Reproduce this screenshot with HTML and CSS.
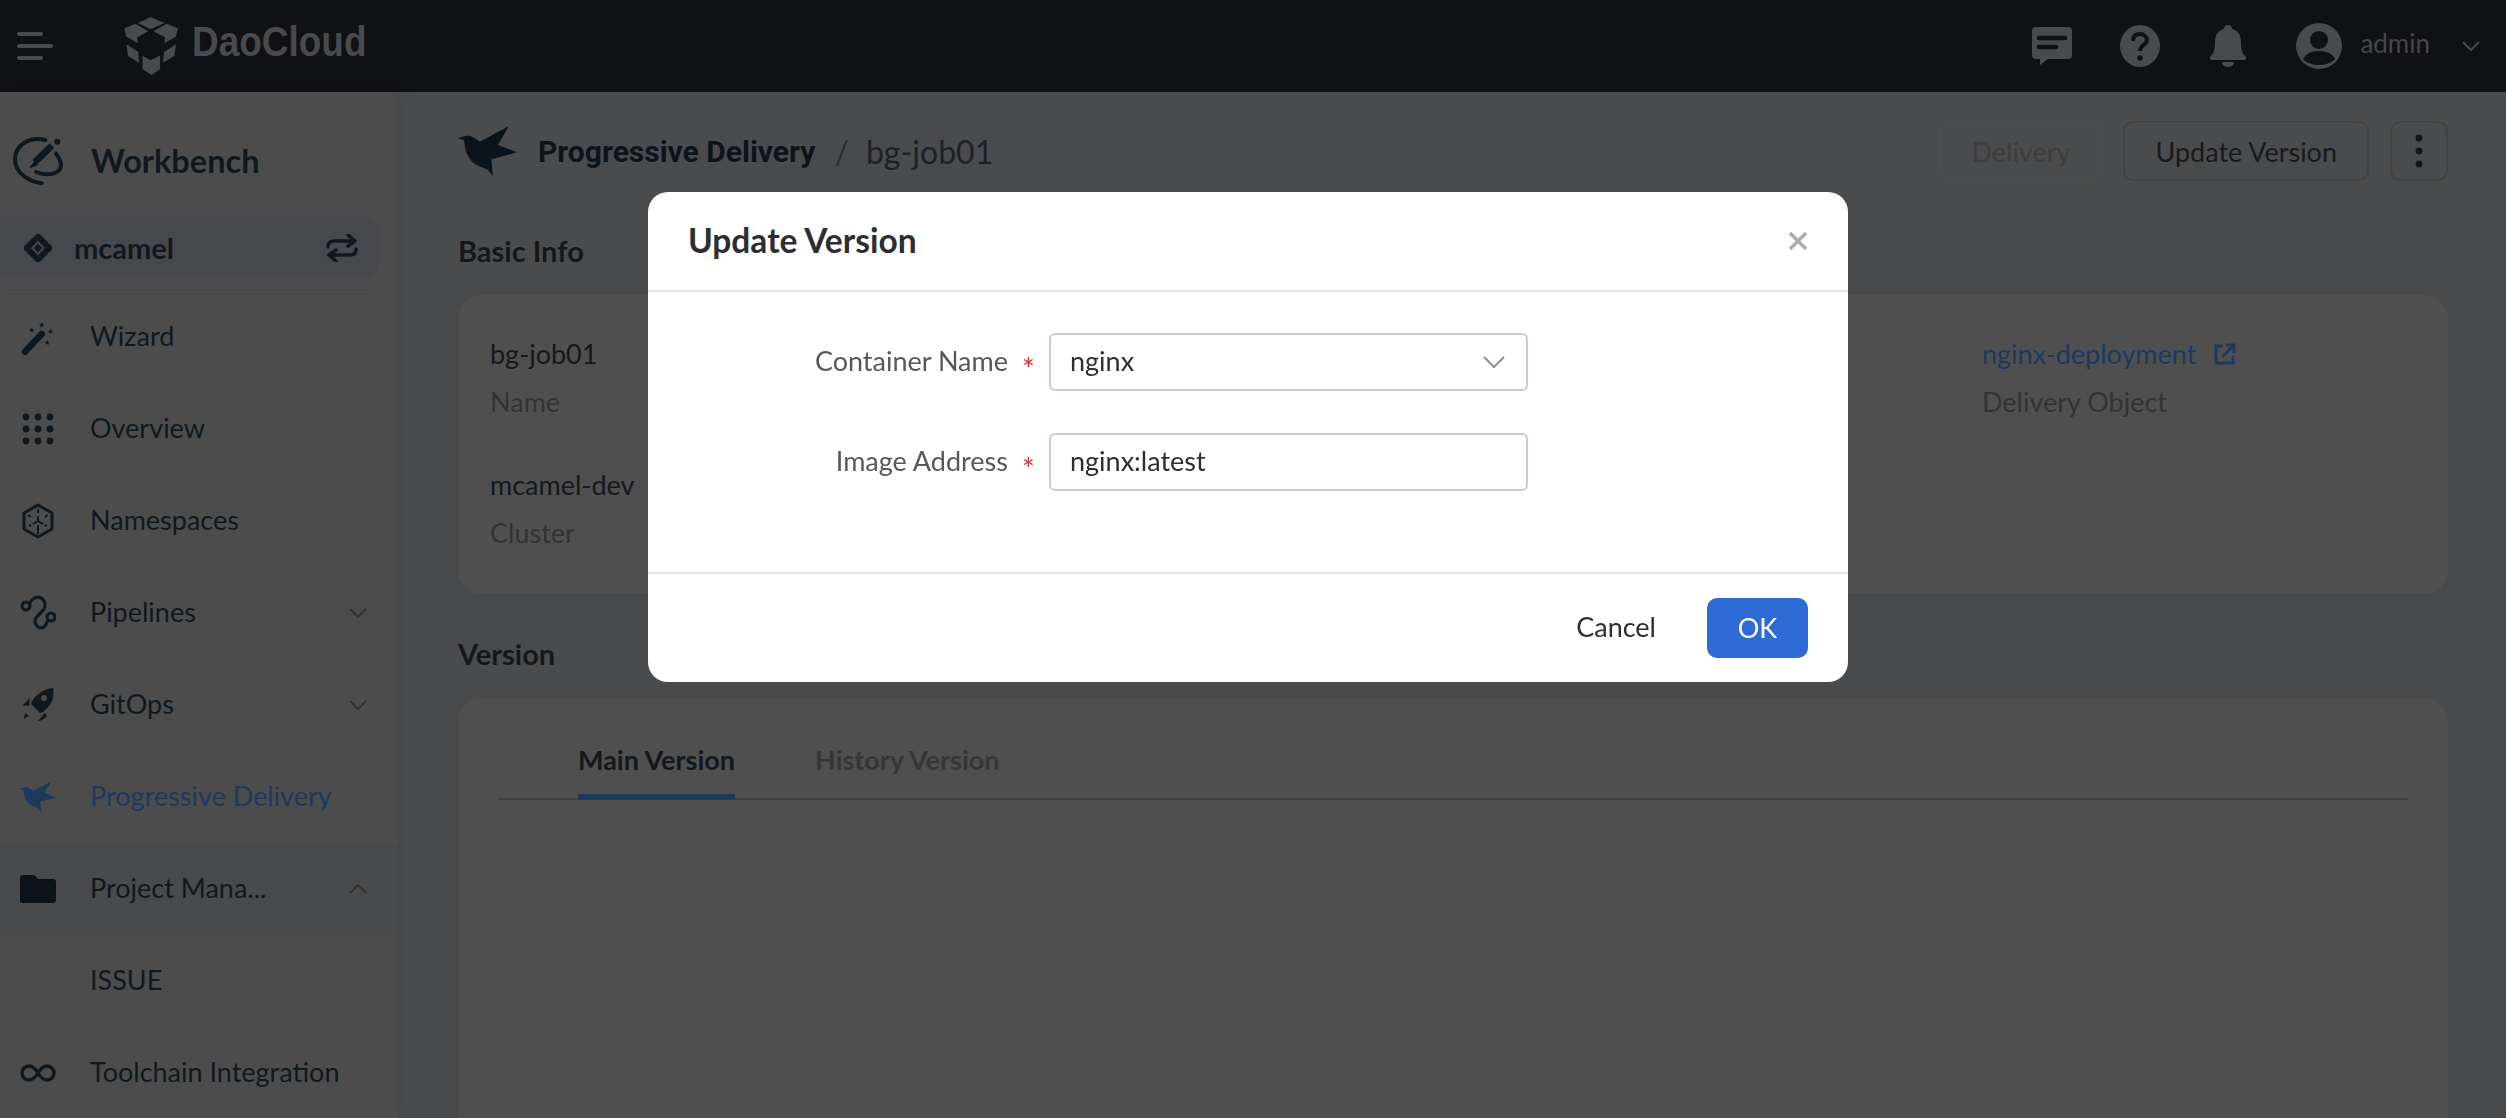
FILE: index.html
```html
<!DOCTYPE html>
<html lang="en">
<head>
    <meta charset="UTF-8">
    <meta name="viewport" content="width=device-width, initial-scale=1.0">
    <title>Progressive Delivery - bg-job01</title>
    <link rel="stylesheet" href="styles.css">
</head>
<body>
    <header class="topbar">
        <svg class="burger" width="36" height="30" viewBox="0 0 36 30"><path d="M2 3h22M2 15h32M2 27h22" fill="none" stroke="currentColor" stroke-width="4" stroke-linecap="round"/></svg>
        <div class="logo">
            <svg width="54" height="58" viewBox="43 24 160 172" fill="currentColor">
                <polygon points="122,24 163,42 122,60 84,42"/>
                <polygon points="44,58 76,44 115,66 82,84 84,102 50,82"/>
                <polygon points="203,58 170,44 130,66 164,84 163,102 197,82"/>
                <polygon points="50,105 85,128 88,160 55,140"/>
                <polygon points="197,105 162,128 158,160 192,140"/>
                <polygon points="98,138 122,152 150,138 150,178 125,196 98,178"/>
            </svg>
            <span class="logo-text">DaoCloud</span>
        </div>
        <div class="top-icons">
            <svg class="top-chat" width="40" height="38" viewBox="0 0 40 38"><path d="M4 0h32a4 4 0 0 1 4 4v24a4 4 0 0 1-4 4H16l-8 6v-6H4a4 4 0 0 1-4-4V4a4 4 0 0 1 4-4z" fill="currentColor"/><path d="M7 11h26M7 20h17" stroke="#101114" stroke-width="4.5" stroke-linecap="round"/></svg>
            <svg class="top-help" width="40" height="42" viewBox="0 0 40 42"><ellipse cx="20" cy="21" rx="20" ry="21" fill="currentColor"/><path d="M13 16c0-5 3-7 7-7s7 3 7 6c0 5-7 5-7 11" fill="none" stroke="#101114" stroke-width="4"/><circle cx="20" cy="33" r="2.8" fill="#101114"/></svg>
            <svg class="top-bell" width="38" height="42" viewBox="0 0 38 42" fill="currentColor"><path d="M19 0c3 0 4 2 4 4 7 2 9 7 9 13 0 7 1 11 4 14 2 2 1 4-1 4H3c-2 0-3-2-1-4 3-3 4-7 4-14 0-6 2-11 9-13 0-2 1-4 4-4z"/><path d="M13 37h12c0 3-3 5-6 5s-6-2-6-5z"/></svg>
            <svg class="top-avatar" width="46" height="46" viewBox="0 0 46 46"><circle cx="23" cy="23" r="23" fill="currentColor"/><circle cx="23" cy="17" r="9" fill="#101114"/><path d="M7 36c3-6 9-8 16-8s13 2 16 8c-4 4-10 6-16 6S11 40 7 36z" fill="#101114"/></svg>
            <span class="top-user">admin</span>
            <svg class="top-caret" width="20" height="12" viewBox="0 0 20 12"><path d="M2 2l8 8 8-8" fill="none" stroke="currentColor" stroke-width="2"/></svg>
        </div>
    </header>

    <div class="main">
        <aside class="sidebar">
            <div class="brand">
                <svg width="60" height="60" viewBox="0 0 180 180" fill="none" stroke="#10181f" stroke-width="12" stroke-linecap="round">
                    <path d="M106 30C60 18 15 45 15 88c0 38 36 66 80 72"/>
                    <path d="M138 70c16 22 20 40 8 52-14 14-44 14-68 4"/>
                    <path d="M74 97l52-50" stroke-width="20" stroke-linecap="butt"/>
                    <path d="M60 112l14-15 6 8z" fill="#10181f" stroke-width="4"/>
                    <circle cx="142" cy="35" r="9" fill="#10181f" stroke="none"/>
                </svg>
                <span class="brand-name">Workbench</span>
            </div>
            <div class="workspace">
                <svg width="28" height="28" viewBox="0 0 28 28" fill="#10181f">
                    <g transform="rotate(45 14 14)">
                        <rect x="3" y="3" width="16" height="6"/>
                        <rect x="19" y="3" width="6" height="16"/>
                        <rect x="9" y="19" width="16" height="6"/>
                        <rect x="3" y="9" width="6" height="16"/>
                        <rect x="11" y="11" width="6" height="6"/>
                    </g>
                </svg>
                <span class="workspace-name">mcamel</span>
                <svg class="workspace-switch" width="32" height="28" viewBox="0 0 32 28" fill="none" stroke="#10181f" stroke-width="3.4" stroke-linecap="round" stroke-linejoin="round"><path d="M2 13c0-4 2-6 6-6h20M22 1l7 6-7 5"/><path d="M30 15c0 4-2 6-6 6H4M10 16l-7 5 7 6"/></svg>
            </div>
            <nav class="menu">
                <a class="menu-item">
                    <svg class="menu-icon" width="36" height="36" viewBox="0 27 108 108" fill="#10181f">
                        <path d="M15 125L65 72" stroke="#10181f" stroke-width="20" stroke-linecap="round"/>
                        <polygon transform="translate(35 60)" points="0,-9 2.1,-2.9 8.6,-2.8 3.4,1.1 5.3,7.3 0,3.6 -5.3,7.3 -3.4,1.1 -8.6,-2.8 -2.1,-2.9"/>
                        <polygon transform="translate(65 45)" points="0,-9 2.1,-2.9 8.6,-2.8 3.4,1.1 5.3,7.3 0,3.6 -5.3,7.3 -3.4,1.1 -8.6,-2.8 -2.1,-2.9"/>
                        <polygon transform="translate(92 65)" points="0,-9 2.1,-2.9 8.6,-2.8 3.4,1.1 5.3,7.3 0,3.6 -5.3,7.3 -3.4,1.1 -8.6,-2.8 -2.1,-2.9"/>
                        <polygon transform="translate(82 98)" points="0,-9 2.1,-2.9 8.6,-2.8 3.4,1.1 5.3,7.3 0,3.6 -5.3,7.3 -3.4,1.1 -8.6,-2.8 -2.1,-2.9"/>
                    </svg>
                    <span class="menu-label">Wizard</span>
                </a>
                <a class="menu-item">
                    <svg class="menu-icon" width="36" height="36" viewBox="0 0 36 36" fill="#10181f"><circle cx="6" cy="6" r="3.4"/><circle cx="18" cy="6" r="3.4"/><circle cx="30" cy="6" r="3.4"/><circle cx="6" cy="18" r="3.4"/><circle cx="18" cy="18" r="3.4"/><circle cx="30" cy="18" r="3.4"/><circle cx="6" cy="30" r="3.4"/><circle cx="18" cy="30" r="3.4"/><circle cx="30" cy="30" r="3.4"/></svg>
                    <span class="menu-label">Overview</span>
                </a>
                <a class="menu-item">
                    <svg class="menu-icon" width="36" height="36" viewBox="0 0 36 36" fill="none" stroke="#10181f" stroke-width="3" stroke-linejoin="round"><path d="M18 2l14 8v16l-14 8-14-8V10z"/><path d="M18 6v4M18 13v5M18 18l-5 3M9 23l2-1M18 18l5 3M27 23l-2-1M18 22v9M8 12l3 2M28 12l-3 2" stroke-width="2"/></svg>
                    <span class="menu-label">Namespaces</span>
                </a>
                <a class="menu-item">
                    <svg class="menu-icon" width="36" height="36" viewBox="0 0 36 36" fill="none" stroke="#10181f" stroke-width="3.2" stroke-linecap="round"><circle cx="6" cy="11" r="4"/><circle cx="31" cy="22" r="4"/><path d="M10 8c2-5 7-7 11-5 4 2 5 7 3 11l-8 9c-2 3-1 7 2 9 4 2 8 0 9-5"/></svg>
                    <span class="menu-label">Pipelines</span>
                    <svg class="menu-caret" width="18" height="10" viewBox="0 0 18 10"><path d="M1 1l8 8 8-8" fill="none" stroke="#323232" stroke-width="2"/></svg>
                </a>
                <a class="menu-item">
                    <svg class="menu-icon" width="36" height="36" viewBox="0 0 36 36" fill="#10181f"><path d="M33 1c2 9-2 18-10 24l-3 1-9-9 1-3C17 6 25 2 33 1z"/><circle cx="24" cy="11" r="3" fill="#4b4b4b"/><path d="M10 11l-8 8c3-1 6 0 7 0zM25 26l-7 8c2 0 7-2 9-5zM5 26l4 3-5 3z"/></svg>
                    <span class="menu-label">GitOps</span>
                    <svg class="menu-caret" width="18" height="10" viewBox="0 0 18 10"><path d="M1 1l8 8 8-8" fill="none" stroke="#323232" stroke-width="2"/></svg>
                </a>
                <a class="menu-item menu-item-active">
                    <svg class="menu-icon" width="36" height="32" viewBox="0 0 59 51" fill="#1c3a5e"><path d="M0 12.3C4 10.5 8 9.5 11.7 10 15 10.5 18 13 21.7 15.7L51 0 40 19l19 7.3-25.7 7L35 50.7C32 46 30 44 26.7 42.3 20 40 14 37 11.7 32.3 8 27 7 23 6.7 19 6.5 16 6 14 5.7 14z"/></svg>
                    <span class="menu-label">Progressive Delivery</span>
                </a>
                <div class="menu-group">
                    <a class="menu-item">
                        <svg class="menu-icon" width="36" height="28" viewBox="0 0 36 28" fill="#0b1218"><path d="M3 0h10c2 0 3 1 4 3l1 1h15a3 3 0 0 1 3 3v18a3 3 0 0 1-3 3H3a3 3 0 0 1-3-3V3a3 3 0 0 1 3-3z"/></svg>
                        <span class="menu-label">Project Mana...</span>
                        <svg class="menu-caret" width="18" height="10" viewBox="0 0 18 10"><path d="M1 9l8-8 8 8" fill="none" stroke="#323232" stroke-width="2"/></svg>
                    </a>
                </div>
                <a class="menu-item">
                    <span class="menu-label menu-label-sub">ISSUE</span>
                </a>
                <a class="menu-item">
                    <svg class="menu-icon" width="36" height="18" viewBox="0 0 36 18" fill="none" stroke="#10181f" stroke-width="3.4"><path d="M18 9C15 4 12 2 9 2a7 7 0 0 0 0 14c3 0 6-2 9-7s6-7 9-7a7 7 0 0 1 0 14c-3 0-6-2-9-7z"/></svg>
                    <span class="menu-label">Toolchain Integration</span>
                </a>
            </nav>
        </aside>

        <main class="content">
            <div class="page-head">
                <svg width="59" height="51" viewBox="0 0 59 51" fill="#0c141b"><path d="M0 12.3C4 10.5 8 9.5 11.7 10 15 10.5 18 13 21.7 15.7L51 0 40 19l19 7.3-25.7 7L35 50.7C32 46 30 44 26.7 42.3 20 40 14 37 11.7 32.3 8 27 7 23 6.7 19 6.5 16 6 14 5.7 14z"/></svg>
                <span class="crumb-title">Progressive Delivery</span>
                <span class="crumb-sep">/</span>
                <span class="crumb-name">bg-job01</span>
                <div class="page-actions">
                    <button class="btn-ghost">Delivery</button>
                    <button class="btn">Update Version</button>
                    <button class="btn btn-more">
                        <svg width="8" height="34" viewBox="0 0 8 34" fill="#10181f"><circle cx="4" cy="4" r="3.4"/><circle cx="4" cy="17" r="3.4"/><circle cx="4" cy="30" r="3.4"/></svg>
                    </button>
                </div>
            </div>

            <h2 class="section-title section-title-first">Basic Info</h2>
            <section class="card info-card">
                <div class="info-col">
                    <div class="info-item">
                        <div class="info-value">bg-job01</div>
                        <div class="info-key">Name</div>
                    </div>
                    <div class="info-item">
                        <div class="info-value">mcamel-dev</div>
                        <div class="info-key">Cluster</div>
                    </div>
                </div>
                <div class="info-col">
                    <div class="info-item">
                        <div class="info-value info-link">nginx-deployment
                            <svg width="22" height="22" viewBox="0 0 22 22" fill="none" stroke="#1d3a5e" stroke-width="3"><path d="M9 3H2v17h17v-7"/><path d="M8 14L20 2M12 2h8v8"/></svg>
                        </div>
                        <div class="info-key">Delivery Object</div>
                    </div>
                </div>
            </section>

            <h2 class="section-title">Version</h2>
            <section class="card tabs-card">
                <div class="tabs">
                    <div class="tab tab-active">Main Version</div>
                    <div class="tab">History Version</div>
                </div>
            </section>
        </main>
    </div>

    <div class="modal-mask">
        <div class="modal">
            <div class="modal-head">
                <span class="modal-title">Update Version</span>
                <svg class="modal-close" width="20" height="20" viewBox="0 0 20 20"><path d="M2 2l16 16M18 2L2 18" stroke="#a9aeb5" stroke-width="3.4"/></svg>
            </div>
            <div class="modal-body">
                <div class="form-row">
                    <label class="form-label">Container Name</label>
                    <span class="form-star">*</span>
                    <div class="form-input">
                        <span class="form-value">nginx</span>
                        <svg width="24" height="14" viewBox="0 0 24 14"><path d="M2 2l10 10L22 2" fill="none" stroke="#8b8f99" stroke-width="2"/></svg>
                    </div>
                </div>
                <div class="form-row">
                    <label class="form-label">Image Address</label>
                    <span class="form-star">*</span>
                    <div class="form-input"><span class="form-value">nginx:latest</span></div>
                </div>
            </div>
            <div class="modal-foot">
                <button class="btn-cancel">Cancel</button>
                <button class="btn-ok">OK</button>
            </div>
        </div>
    </div>
</body>
</html>
```

FILE: styles.css
```css
* {
    box-sizing: border-box;
}
html, body {
    margin: 0;
    height: 100%;
    overflow: hidden;
}
body {
    font-family: 'Lato', 'Open Sans', sans-serif;
    font-size: 27px;
    background-color: #4a4b4c;
    color: #10181f;
    display: flex;
    flex-direction: column;
}

/* top bar */
.topbar {
    height: 92px;
    flex: none;
    display: flex;
    align-items: center;
    background-color: #101114;
    color: #494a4d;
}
.burger {
    margin-left: 17px;
}
.logo {
    display: flex;
    align-items: center;
    margin-left: 71px;
    gap: 14px;
}
.logo-text {
    font-family: 'Liberation Sans', sans-serif;
    font-size: 42px;
    font-weight: bold;
    margin-top: -8px;
    transform: scaleX(0.88);
    transform-origin: left center;
}
.top-icons {
    margin-left: auto;
    display: flex;
    align-items: center;
}
.top-chat {
    margin-right: 48px;
}
.top-help {
    margin-right: 49px;
}
.top-bell {
    margin-right: 49px;
}
.top-user {
    margin: -6px 31px 0 18px;
    font-size: 26px;
    color: #46474a;
}
.top-caret {
    margin-right: 25px;
}

/* sidebar */
.main {
    flex: 1;
    display: flex;
    min-height: 0;
}
.sidebar {
    width: 398px;
    flex: none;
    background-color: #4c4c4c;
    box-shadow: 6px 0 10px rgba(0, 0, 0, 0.04);
    padding-top: 43px;
}
.brand {
    display: flex;
    align-items: center;
    height: 50px;
    padding-left: 10px;
}
.brand-name {
    margin-left: 21px;
    font-size: 32.5px;
    font-weight: 700;
}
.workspace {
    margin-top: 31px;
    width: 378px;
    height: 63px;
    border-radius: 0 14px 14px 0;
    background-color: #46484b;
    display: flex;
    align-items: center;
    padding-left: 24px;
}
.workspace-name {
    margin-left: 22px;
    font-size: 29px;
    font-weight: 700;
}
.workspace-switch {
    margin-left: auto;
    margin-right: 20px;
}
.menu {
    margin-top: 10px;
    border-top: 2px solid #474747;
    margin-left: 8px;
    margin-right: 30px;
}
.menu-item {
    height: 92px;
    display: flex;
    align-items: center;
    position: relative;
    margin-left: -8px;
    margin-right: -30px;
    padding-left: 90px;
}
.menu-label {
    margin-bottom: 3px;
}
.menu-icon {
    position: absolute;
    left: 20px;
    top: 50%;
    transform: translateY(-50%);
}
.menu-caret {
    margin-left: auto;
    margin-right: 31px;
}
.menu-item-active .menu-label {
    color: #1d3a5e;
}
.menu-group {
    margin-left: -8px;
    margin-right: -30px;
    background-color: #484a4c;
}
.menu-group .menu-item {
    margin: 0;
}

/* page content */
.content {
    flex: 1;
    min-width: 0;
    padding: 27px 58px 0 60px;
}
.page-head {
    display: flex;
    align-items: center;
    height: 64px;
}
.crumb-title {
    margin-left: 21px;
    font-family: 'Roboto', sans-serif;
    font-size: 30px;
    font-weight: 700;
    color: #0c141b;
}
.crumb-sep {
    margin: 0 17px 0 19px;
    font-size: 32px;
    color: #2b2e31;
}
.crumb-name {
    font-size: 32px;
    color: #1b2127;
}
.page-actions {
    margin-left: auto;
    display: flex;
    gap: 21px;
    align-items: center;
}
.btn-ghost, .btn {
    height: 60px;
    font: inherit;
    background: transparent;
    border-radius: 10px;
    padding: 0 30px;
}
.btn-ghost {
    border: 2px solid #4d4d4d;
    color: #3d3d3d;
}
.btn {
    border: 2px solid #424242;
    color: #17191c;
}
.btn-more {
    width: 58px;
    padding: 0;
    display: flex;
    align-items: center;
    justify-content: center;
}
.section-title {
    margin: 40px 0 0;
    font-size: 29px;
    font-weight: 700;
    line-height: 40px;
    color: #14181c;
}
.section-title-first {
    margin-top: 48px;
}
.card {
    background-color: #4f4f4f;
    border-radius: 24px;
    box-shadow: 0 4px 24px rgba(0, 0, 0, 0.05);
}
.info-card {
    margin-top: 24px;
    height: 299px;
    display: flex;
    justify-content: space-between;
    padding: 38px 0 0 32px;
}
.info-col {
    width: 466px;
}
.info-item {
    height: 131px;
}
.info-value {
    line-height: 42px;
    color: #14181c;
}
.info-key {
    margin-top: 6px;
    line-height: 42px;
    color: #333333;
}
.info-link {
    color: #1d3a5e;
    display: flex;
    align-items: center;
    gap: 18px;
}
.tabs-card {
    margin-top: 24px;
    height: 600px;
    padding: 32px 40px 0;
}
.tabs {
    display: flex;
    gap: 80px;
    padding-left: 80px;
    height: 70px;
    border-bottom: 2px solid #404040;
}
.tab {
    height: 70px;
    line-height: 60px;
    font-weight: 700;
    color: #363636;
}
.tab-active {
    color: #14181c;
    border-bottom: 6px solid #1c3a60;
}

/* update version dialog */
.modal-mask {
    position: fixed;
    left: 0;
    top: 0;
    right: 0;
    bottom: 0;
    padding: 192px 0 0 648px;
}
.modal {
    width: 1200px;
    height: 490px;
    background-color: #ffffff;
    border-radius: 20px;
    display: flex;
    flex-direction: column;
    color: #2b2f33;
}
.modal-head {
    height: 100px;
    flex: none;
    border-bottom: 2px solid #e3e5ec;
    display: flex;
    align-items: center;
    justify-content: space-between;
    padding: 0 40px;
}
.modal-title {
    font-size: 33.5px;
    font-weight: 700;
    margin-top: -3px;
}
.modal-body {
    flex: 1;
    padding-top: 41px;
}
.form-row {
    display: flex;
    align-items: center;
    height: 58px;
    margin-bottom: 42px;
}
.form-label {
    width: 360px;
    margin-bottom: 3px;
    text-align: right;
    color: #55585e;
}
.form-star {
    width: 41px;
    padding-top: 12px;
    font-size: 30px;
    text-align: center;
    color: #e02f2f;
}
.form-input {
    width: 479px;
    height: 58px;
    border: 2px solid #c8ccd8;
    border-radius: 6px;
    display: flex;
    align-items: center;
    justify-content: space-between;
    padding: 0 20px 0 19px;
}
.form-value {
    margin-bottom: 3px;
}
.modal-foot {
    height: 110px;
    flex: none;
    border-top: 2px solid #e3e5ec;
    display: flex;
    align-items: center;
    justify-content: flex-end;
    padding: 0 40px 0 0;
}
.btn-cancel, .btn-ok {
    font: inherit;
    border: none;
    height: 60px;
    border-radius: 10px;
    cursor: pointer;
}
.btn-cancel {
    background: transparent;
    color: #2b2f33;
    padding: 0 24px 3px;
    margin-right: 27px;
}
.btn-ok {
    width: 101px;
    padding-bottom: 3px;
    background-color: #2e6bd6;
    color: #ffffff;
}
```
